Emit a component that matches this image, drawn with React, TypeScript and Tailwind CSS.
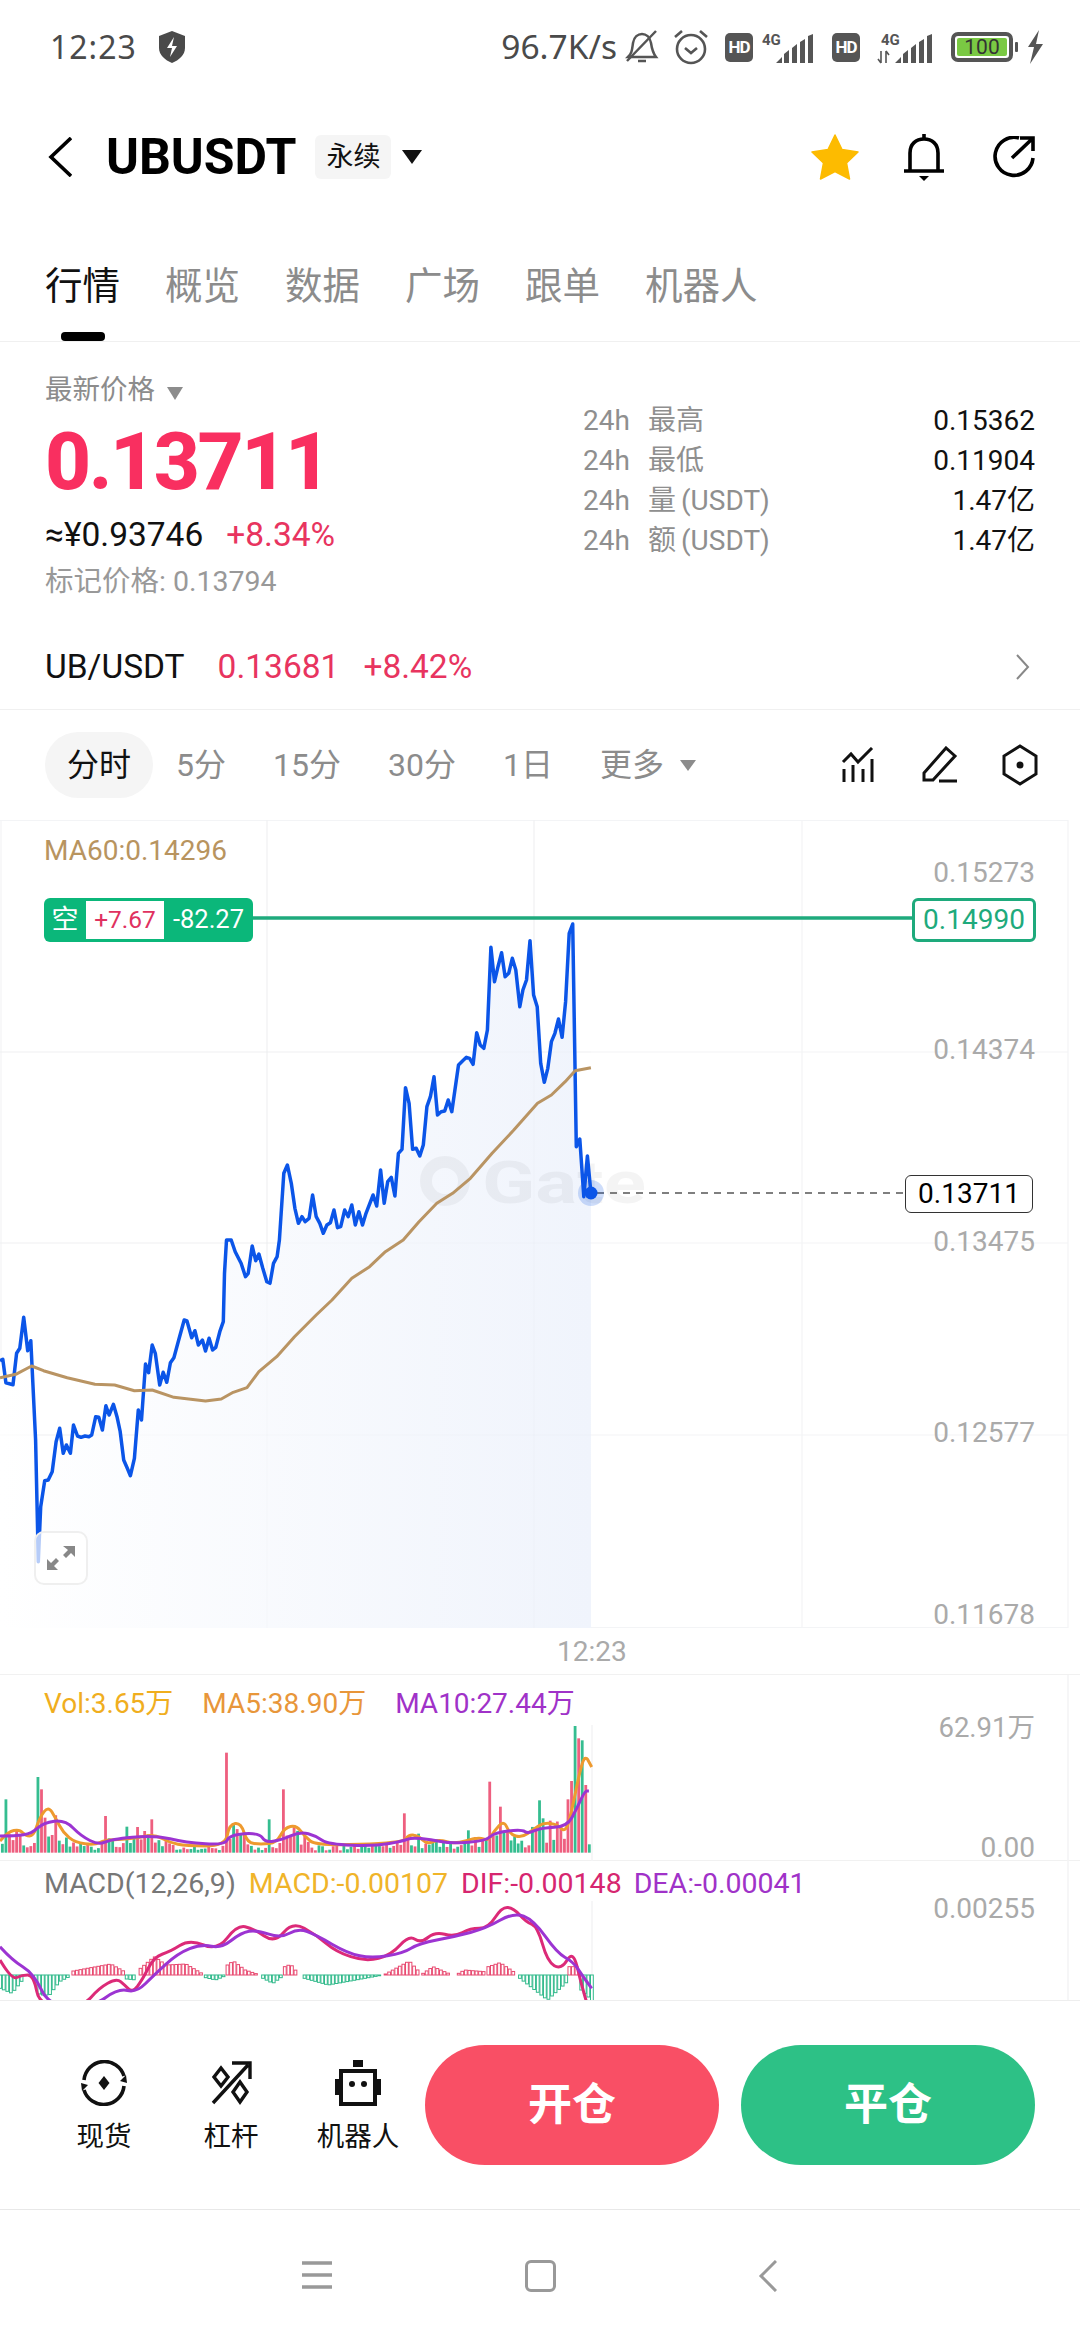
import React from "react";

type P = number[];
const SX = 2.53;
// pairs are sampled x / y readings from the reference
const pts = (a: P, y0: number, off: number) => {
  const out: string[] = [];
  for (let i = 0; i < a.length; i += 2) out.push(`${(a[i] / SX).toFixed(1)},${(y0 + a[i + 1] / 3 - off).toFixed(1)}`);
  return out.join(" ");
};
// smooth curve through the midpoints of the sampled readings
const curve = (a: P, y0: number, off: number) => {
  const X = (i: number) => a[i] / SX;
  const Y = (i: number) => y0 + a[i + 1] / 3 - off;
  let d = `M${X(0).toFixed(1)} ${Y(0).toFixed(1)}`;
  for (let i = 2; i < a.length - 2; i += 2) {
    d += ` Q${X(i).toFixed(1)} ${Y(i).toFixed(1)} ${((X(i) + X(i + 2)) / 2).toFixed(1)} ${((Y(i) + Y(i + 2)) / 2).toFixed(1)}`;
  }
  d += ` L${X(a.length - 2).toFixed(1)} ${Y(a.length - 2).toFixed(1)}`;
  return d;
};
const lerp = (a: P, x: number) => {
  for (let i = 0; i < a.length - 2; i += 2) {
    if (x >= a[i] && x <= a[i + 2]) return a[i + 1] + ((a[i + 3] - a[i + 1]) * (x - a[i])) / (a[i + 2] - a[i] || 1);
  }
  return a[a.length - 1];
};

const LINE_A: P = [0,362,7,358,15,428,33,434,42,340,50,325,60,232,70,332,78,302,90,600,97,965,103,800,113,722,122,720,132,695,142,605,151,565,160,640,168,615,178,640,186,555,196,588,205,592,215,588,225,590,232,585,242,530,250,532,259,570,268,497,276,525,287,493,296,530,304,575,313,660,322,685,330,707,340,655,350,510,358,540,368,372,376,398,385,315,393,340,404,435,413,397,422,427,431,368,440,353,452,300,466,240,473,243,485,293,493,272,502,315,512,300,520,333,529,295,538,330,546,322,556,275,565,245,568,100,573,0,585,0,595,35,610,70,621,110,628,100,638,18,647,62,655,42,665,85,675,125,683,130,692,70,701,50,707,0];
const LINE_B: P = [707,1260,718,1060,727,1035,737,1090,746,1165,755,1210,764,1190,772,1205,782,1195,791,1125,800,1190,809,1210,818,1240,827,1215,836,1208,845,1170,854,1223,862,1220,872,1170,881,1190,890,1155,899,1215,908,1175,917,1215,926,1180,944,1125,953,1158,963,1050,972,1150,981,1085,990,1072,999,1128,1008,1000,1017,988,1026,803,1035,850,1044,988,1053,985,1062,1008,1071,975,1080,860,1089,830,1098,770,1107,885,1116,875,1125,873,1134,840,1143,875,1160,735,1170,723,1180,712,1188,715,1197,733,1206,638,1215,675,1224,685,1233,630,1242,382,1251,485,1260,440,1269,398,1278,470,1287,460,1296,415,1305,450,1315,560,1323,510,1332,480,1341,362,1350,525,1359,560,1368,730,1377,787,1386,745,1395,665,1404,640,1413,597,1422,652,1431,545,1440,340,1449,312,1458,980,1467,957,1477,1130,1486,1008,1495,1118];
const MA_A: P = [0,413,40,403,80,378,110,392,170,413,240,433,290,435,340,452,385,450,440,472,520,483,560,477,590,457,625,443,655,395,700,350,745,290,800,225,840,180,890,115,935,80,975,35,1020,0];
const MA_B: P = [1020,1260,1060,1205,1105,1150,1145,1120,1190,1075,1245,1000,1300,930,1360,850,1395,825,1430,785,1455,752,1495,743];
const MA5: P = [0,540,20,512,50,505,65,525,85,525,100,470,122,435,140,470,160,515,190,545,240,552,265,537,310,535,350,530,390,520,430,545,470,555,570,555,580,490,610,485,625,545,660,550,700,545,720,500,750,493,770,525,800,555,1020,545,1035,520,1060,525,1080,550,1110,535,1150,550,1210,528,1235,540,1250,510,1275,478,1290,520,1320,530,1350,505,1375,485,1410,490,1430,515,1445,460,1465,340,1480,280,1497,318];
const MA10: P = [0,525,40,525,80,518,110,485,165,477,205,525,250,552,280,535,390,522,470,545,570,552,580,522,655,515,672,545,710,537,760,512,800,525,830,550,950,555,1020,540,1040,530,1090,535,1140,548,1230,540,1250,515,1320,505,1335,518,1370,500,1435,497,1460,440,1480,390,1490,390];
const DIF: P = [0,900,30,960,55,945,85,945,100,1040,210,1040,250,985,295,955,315,975,335,998,360,960,390,890,430,875,480,838,550,872,600,795,640,805,695,850,740,785,800,825,850,875,925,905,990,885,1035,825,1065,850,1100,815,1150,830,1190,805,1235,805,1270,740,1300,745,1330,785,1360,800,1385,905,1420,930,1450,870,1470,970,1490,1050];
const DEA: P = [0,860,30,900,85,940,125,1040,235,1040,300,985,345,998,390,945,450,880,510,852,560,865,610,818,650,810,710,835,755,805,800,825,880,880,940,895,1020,880,1060,850,1150,830,1230,805,1300,757,1350,780,1410,880,1450,905,1475,950,1497,985];

const SPIKES: [number, number, number][] = [[15,415,0],[97,348,0],[106,385,1],[115,470,1],[268,465,1],[322,497,0],[349,498,1],[367,510,1],[385,475,1],[575,275,1],[684,475,0],[718,385,1],[1026,457,1],[1188,508,0],[1242,362,1],[1269,437,1],[1368,418,0],[1377,472,0],[1440,415,1],[1449,360,1],[1458,195,0],[1467,232,1],[1476,238,0],[1485,372,1],[1494,550,0]];

const makeBars = () => {
  let s = 17;
  const rnd = () => { s = (s * 137 + 59) % 1009; return s / 1009; };
  const bars: { x: number; top: number; up: boolean }[] = [];
  for (let zx = 6; zx <= 1494; zx += 9) {
    const sp = SPIKES.find((k) => Math.abs(k[0] - zx) < 4.5);
    const env = 575 - lerp(MA5, zx);
    const top = sp ? sp[1] : 575 - env * (0.3 + rnd() * 0.85);
    bars.push({ x: zx, top, up: sp ? sp[2] === 1 : rnd() > 0.45 });
  }
  return bars;
};

const HIST: [number, number, number[], boolean][] = [
  [0, 60, [0,40,30,55,60,10], false],
  [90, 175, [90,30,100,60,125,60,150,20,175,5], false],
  [185, 315, [185,12,220,20,280,33,315,10], true],
  [320, 345, [320,12,345,15], false],
  [355, 510, [355,20,390,55,420,30,470,33,510,5], true],
  [520, 565, [520,8,545,15,565,5], false],
  [575, 650, [575,30,590,42,620,15,650,3], true],
  [665, 710, [665,10,690,25,710,8], false],
  [720, 755, [720,25,735,32,755,3], true],
  [770, 960, [770,10,830,30,900,15,960,2], false],
  [975, 1060, [975,3,1035,42,1060,10], true],
  [1070, 1140, [1070,5,1095,25,1140,2], true],
  [1160, 1225, [1160,5,1175,15,1225,10], true],
  [1235, 1305, [1235,25,1265,37,1305,5], true],
  [1315, 1435, [1315,10,1385,75,1435,20], false],
  [1440, 1460, [1440,25,1460,25], true],
  [1470, 1500, [1470,45,1500,80], false],
];

const MainChart = () => {
  const o = 820;
  const line = pts(LINE_A, 1240, o) + " " + pts(LINE_B, 820, o);
  const ma = pts(MA_A, 1240, o) + " " + pts(MA_B, 820, o);
  return (
    <svg className="absolute inset-0" width="1080" height="808" viewBox="0 0 1080 808">
      <defs>
        <linearGradient id="fillG" x1="0" x2="1" y1="0" y2="0">
          <stop offset="0" stopColor="#ffffff" />
          <stop offset="1" stopColor="#f0f4fc" />
        </linearGradient>
      </defs>
      <path d="M0 0.500H1068M0 232H1068M0 423H1068M0 615H1068M0 807.500H1068M1 0V808M267 0V808M534 0V808M802 0V808M1068 0V808" stroke="#f3f4f6" strokeWidth="1.200" fill="none" />
      <polygon points={`0,808 ${line} 591,808`} fill="url(#fillG)" />
      <path d="M267 0V808M534 0V808M0 232H591M0 423H591M0 615H591" stroke="#000" strokeOpacity="0.015" strokeWidth="1" />
      <g fill="#000" fillOpacity="0.045">
        <circle cx="445" cy="361" r="19" fill="none" stroke="#000" strokeOpacity="0.045" strokeWidth="12" />
        <text x="482" y="383" fontSize="60" fontWeight="700" textLength="164" lengthAdjust="spacingAndGlyphs" fontFamily="Roboto, sans-serif">Gate</text>
      </g>
      <polyline points={line} fill="none" stroke="#0b55e8" strokeWidth="3.500" strokeLinejoin="round" />
      <polyline points={ma} fill="none" stroke="#b99463" strokeWidth="3" strokeLinejoin="round" />
      <path d="M253 98H912" stroke="#1eaa7c" strokeWidth="3.500" />
      <path d="M597 373H905" stroke="#555" strokeWidth="1.500" strokeDasharray="7 6" />
      <circle cx="591" cy="373" r="13" fill="#0b55e8" fillOpacity="0.2" />
      <circle cx="591" cy="373" r="6.500" fill="#0b55e8" />
    </svg>
  );
};

const VolChart = () => {
  const bars = makeBars();
  const o = 1674;
  return (
    <svg className="absolute inset-0" width="1080" height="186" viewBox="0 0 1080 186">
      <path d="M592 50V186M1068 0V186" stroke="#f3f3f5" strokeWidth="1.500" />
      {bars.map((b, i) => (
        <rect key={i} x={b.x / SX - 1.4} y={1660 + b.top / 3 - o} width="2.800" height={(575 - b.top) / 3} fill={b.up ? "#ee5f7f" : "#35bd90"} />
      ))}
      <path d={curve(MA5, 1660, o)} fill="none" stroke="#ee9a2e" strokeWidth="3" />
      <path d={curve(MA10, 1660, o)} fill="none" stroke="#9c34d2" strokeWidth="3" />
    </svg>
  );
};

const MacdChart = () => {
  const o = 1861;
  const rects: React.ReactNode[] = [];
  HIST.forEach(([a, b, env, up], si) => {
    for (let zx = a; zx <= b; zx += 9) {
      const d = lerp(env, zx) / 3;
      const base = 1660 + 945 / 3 - o;
      rects.push(
        <rect key={`${si}-${zx}`} x={zx / SX - 1.2} y={up ? base - d : base} width="2.800" height={d} fill="#ffffff" stroke={up ? "#e8486f" : "#2fb98a"} strokeWidth="1" />
      );
    }
  });
  return (
    <svg className="absolute inset-0" width="1080" height="140" viewBox="0 0 1080 140">
      <path d="M592 40V140M1068 0V140" stroke="#f3f3f5" strokeWidth="1.500" />
      {rects}
      <path d={curve(DIF, 1660, o)} fill="none" stroke="#dc2a78" strokeWidth="3" />
      <path d={curve(DEA, 1660, o)} fill="none" stroke="#9c34d2" strokeWidth="3" />
    </svg>
  );
};

const Signal = ({ arrows }: { arrows?: boolean }) => (
  <svg width="58" height="34" viewBox="0 -4 58 34" fill="#555">
    <text x="4" y="11" fontSize="15" fontWeight="700" fontFamily="Roboto, sans-serif">4G</text>
    {arrows && <path d="M4 17v12M4 29l-3-4M9 29V17M9 17l3 4" stroke="#555" strokeWidth="1.600" fill="none" />}
    <path d="M18 29l6-6v6zM26 29v-9l5-4v13zM34 29V14l5-4v19zM42 29V8l5-3v24zM50 29V2l5-2v29z" />
  </svg>
);

const Hd = () => (
  <div className="w-[28px] h-[29px] rounded-[5px] bg-[#555] flex items-center justify-center text-white text-[17px] font-bold leading-none tracking-[-1px]">HD</div>
);

const StatusBar = () => (
  <div className="h-[94px] shrink-0 flex items-center pl-[50px] pr-[36px] text-[#4a4a4a]">
    <span className="text-[32px] leading-none tracking-[1px] font-['Noto_Sans',sans-serif]">12:23</span>
    <svg className="ml-[21px]" width="28" height="32" viewBox="0 0 28 32">
      <path d="M14 0l13 5v12c0 7-6 12-13 15C7 29 1 24 1 17V5z" fill="#4a4a4a" />
      <path d="M16 6l-7 11h5l-2 9 7-11h-5z" fill="#fff" />
    </svg>
    <div className="flex-1" />
    <span className="text-[33.500px] leading-none font-['Noto_Sans',sans-serif]">96.7K/s</span>
    <svg className="ml-[8px]" width="34" height="36" viewBox="0 0 34 36" fill="none" stroke="#555" strokeWidth="2.500">
      <path d="M3 28c4-4 4-7 5-14 1-6 5-9 9-9s8 3 9 9c1 7 2 10 5 14z" />
      <path d="M13 32h8M2 32L31 2" />
    </svg>
    <svg className="ml-[14px]" width="36" height="38" viewBox="0 0 36 38" fill="none" stroke="#555" strokeWidth="2.600">
      <circle cx="18" cy="21" r="14" />
      <path d="M12 20l6 5 6-5M2 9l7-6M34 9l-7-6" />
    </svg>
    <div className="ml-[16px]"><Hd /></div>
    <div className="ml-[5px]"><Signal /></div>
    <div className="ml-[16px]"><Hd /></div>
    <div className="ml-[17px]"><Signal arrows /></div>
    <div className="ml-[16px] relative w-[62px] h-[30px] rounded-[7px] border-[4px] border-[#555] p-[2px] mr-[2px]">
      <div className="h-full w-full bg-[#7ac943] rounded-[2px] flex items-center justify-center text-[21px] leading-none text-[#333]">100</div>
    </div>
    <div className="w-[3px] h-[10px] bg-[#555] rounded-[1px]" />
    <svg className="ml-[8px]" width="18" height="34" viewBox="0 0 18 34" fill="#555">
      <path d="M13 0L2 17h6L4 34l13-20h-7z" />
    </svg>
  </div>
);

const Header = () => (
  <div className="h-[126px] shrink-0 flex items-center pl-[48px] pr-[45px]">
    <svg width="24" height="40" viewBox="0 0 24 40" fill="none" stroke="#000" strokeWidth="3.600">
      <path d="M23 1L3 20l20 19" />
    </svg>
    <span className="ml-[34px] text-[50px] font-bold leading-none text-black">UBUSDT</span>
    <div className="ml-[19px] w-[76px] h-[44px] rounded-[6px] bg-[#f5f5f5] flex items-center justify-center text-[27px] text-[#111] leading-none">永续</div>
    <div className="ml-[11px] w-0 h-0 border-x-[10px] border-x-transparent border-t-[14px] border-t-[#111]" />
    <div className="flex-1" />
    <svg width="48" height="46" viewBox="0 0 48 46" fill="#fdbb00">
      <path d="M24 1l7 14.500 16 2.500-11.500 11 3 16L24 37.500 9.500 45l3-16L1 18l16-2.500z" stroke="#fdbb00" strokeWidth="1.500" strokeLinejoin="round" />
    </svg>
    <svg className="ml-[44px]" width="42" height="48" viewBox="0 0 42 48" fill="none" stroke="#000" strokeWidth="3.600">
      <path d="M7 37V20C7 11 13 6 21 6s14 5 14 14v17M1 38h40" />
      <path d="M21 1v4" />
      <path d="M16 43h10l-5 5z" fill="#000" stroke="none" />
    </svg>
    <svg className="ml-[48px]" width="42" height="42" viewBox="0 0 42 42" fill="none" stroke="#000" strokeWidth="3.600">
      <path d="M40 22a19 19 0 1 1-14-20" />
      <path d="M19 22L39 3M27 2h13v13" />
    </svg>
  </div>
);

const Tabs = () => (
  <div className="h-[122px] shrink-0 border-b border-[#f0f0f0] flex pl-[45px] pt-[46px] gap-[45px] text-[37.500px] leading-[40px] text-[#8c8c8c]">
    <div className="flex flex-col items-center">
      <span className="text-[#111]">行情</span>
      <div className="mt-[26px] w-[44px] h-[9px] rounded-[4px] bg-black" />
    </div>
    <span>概览</span>
    <span>数据</span>
    <span>广场</span>
    <span>跟单</span>
    <span>机器人</span>
  </div>
);

const Stat = ({ l, r, v }: { l: string; r?: string; v: string }) => (
  <div className="h-[40px] flex items-center text-[28px] leading-none">
    <span className="text-[#8f8f8f] w-[65px]">24h</span>
    <span className="text-[#8f8f8f]">{l}{r && <span className="ml-[5px]">{r}</span>}</span>
    <span className="ml-auto text-[#111]">{v}</span>
  </div>
);

const Price = () => (
  <div className="h-[368px] shrink-0 border-b border-[#f0f0f0] flex flex-col">
    <div className="h-[256px] flex">
      <div className="w-[583px] pl-[45px] pt-[32px]">
        <div className="h-[32px] flex items-center text-[27.500px] text-[#8c8c8c] leading-none">
          最新价格
          <div className="ml-[12px] mt-[6px] w-0 h-0 border-x-[8px] border-x-transparent border-t-[13px] border-t-[#8c8c8c]" />
        </div>
        <div className="mt-[16px] h-[80px] leading-[80px] text-[80px] font-extrabold tracking-[-2.400px] text-[#f92f60]">0.13711</div>
        <div className="mt-[15px] h-[36px] flex items-center text-[33.500px] leading-none">
          <span className="text-[#111]">≈¥0.93746</span>
          <span className="ml-[23px] text-[#e8345f]">+8.34%</span>
        </div>
        <div className="mt-[13px] h-[32px] flex items-center text-[28.500px] text-[#999] leading-none">标记价格: 0.13794</div>
      </div>
      <div className="flex-1 pt-[59px] pr-[45px]">
        <Stat l="最高" v="0.15362" />
        <Stat l="最低" v="0.11904" />
        <Stat l="量" r="(USDT)" v="1.47亿" />
        <Stat l="额" r="(USDT)" v="1.47亿" />
      </div>
    </div>
    <div className="mt-[49px] h-[40px] flex items-center pl-[45px] pr-[50px] text-[33.500px] leading-none">
      <span className="text-[#111]">UB/USDT</span>
      <span className="ml-[33px] text-[#e8345f]">0.13681</span>
      <span className="ml-[24px] text-[#e8345f]">+8.42%</span>
      <svg className="ml-auto" width="15" height="26" viewBox="0 0 15 26" fill="none" stroke="#888" strokeWidth="2">
        <path d="M2 1l11 12L2 25" />
      </svg>
    </div>
  </div>
);

const Intervals = () => (
  <div className="h-[110px] shrink-0 flex items-center pl-[45px] pr-[41px] text-[32px] leading-none text-[#8c8c8c]">
    <div className="w-[108px] h-[66px] rounded-[33px] bg-[#f5f5f5] text-[#111] flex items-center justify-center mr-[23px]">分时</div>
    <div className="flex items-center gap-[47px]">
      <span>5分</span>
      <span>15分</span>
      <span>30分</span>
      <span>1日</span>
      <span className="flex items-center">
        更多
        <span className="ml-[16px] w-0 h-0 border-x-[8px] border-x-transparent border-t-[11px] border-t-[#8c8c8c]" />
      </span>
    </div>
    <div className="flex-1" />
    <svg width="34" height="36" viewBox="0 0 34 36" fill="none" stroke="#111" strokeWidth="3">
      <path d="M2 15l8-8 7 8L31 1" />
      <path d="M3 22v13M12 18v17M22 22v13M31 12v23" />
    </svg>
    <svg className="ml-[46px]" width="38" height="38" viewBox="0 0 38 38" fill="none" stroke="#111" strokeWidth="3">
      <path d="M3 27L25 2l9 8-22 24H3zM18 35h18" />
    </svg>
    <svg className="ml-[42px]" width="38" height="42" viewBox="0 0 38 42" fill="none" stroke="#111" strokeWidth="3">
      <path d="M19 2l16 10v18L19 40 3 30V12z" />
      <circle cx="19" cy="21" r="3.500" fill="#111" stroke="none" />
    </svg>
  </div>
);

const Chart = () => (
  <div className="relative h-[808px] shrink-0">
    <MainChart />
    <div className="absolute left-[44px] top-[11px] text-[28px] leading-[40px] text-[#b8945f]">MA60:0.14296</div>
    <div className="absolute left-[44px] top-[78px] w-[209px] h-[44px] rounded-[6px] bg-[#0bb77a] flex items-center text-[27px] leading-none text-white">
      <span className="w-[42px] text-center">空</span>
      <span className="w-[78px] h-[38px] bg-white text-[#e0315f] flex items-center justify-center text-[24.500px]">+7.67</span>
      <span className="flex-1 text-center text-[25.500px]">-82.27</span>
    </div>
    <div className="absolute left-[912px] top-[78px] w-[124px] h-[44px] rounded-[6px] border-[3px] border-[#1eaa7c] bg-white flex items-center justify-center text-[28px] leading-none text-[#1eaa7c]">0.14990</div>
    <div className="absolute left-[905px] top-[355px] w-[128px] h-[38px] rounded-[6px] border border-[#333] bg-white flex items-center justify-center text-[28px] leading-none text-black">0.13711</div>
    <div className="absolute right-[45px] top-[33px] text-[28px] leading-[40px] text-[#aaa]">0.15273</div>
    <div className="absolute right-[45px] top-[210px] text-[28px] leading-[40px] text-[#aaa]">0.14374</div>
    <div className="absolute right-[45px] top-[402px] text-[28px] leading-[40px] text-[#aaa]">0.13475</div>
    <div className="absolute right-[45px] top-[593px] text-[28px] leading-[40px] text-[#aaa]">0.12577</div>
    <div className="absolute right-[45px] top-[775px] text-[28px] leading-[40px] text-[#aaa]">0.11678</div>
    <div className="absolute left-[34px] top-[711px] w-[54px] h-[54px] rounded-[10px] border-2 border-[#efefef] bg-white/70 flex items-center justify-center">
      <svg width="28" height="26" viewBox="0 0 28 26" fill="#888">
        <path d="M16 1h12v11l-4-4-5 5-3-3 5-5zM0 14l4 4 5-5 3 3-5 5 4 4H0z" />
      </svg>
    </div>
  </div>
);

const TimeRow = () => (
  <div className="h-[46px] shrink-0 pl-[557px] pt-[6px] text-[28px] leading-[36px] text-[#aaa]">12:23</div>
);

const VolumePane = () => (
  <div className="relative h-[187px] shrink-0 border-t border-[#f1f1f1] border-b">
    <VolChart />
    <div className="relative flex pl-[44px] pt-[10px] text-[28px] leading-[38px]">
      <span className="text-[#f0ae1e]">Vol:3.65万</span>
      <span className="ml-[29px] text-[#e8963a]">MA5:38.90万</span>
      <span className="ml-[29px] text-[#a032c8]">MA10:27.44万</span>
    </div>
    <div className="absolute right-[45px] top-[33px] text-[27.500px] leading-[40px] text-[#aaa]">62.91万</div>
    <div className="absolute right-[45px] top-[153px] text-[28px] leading-[40px] text-[#aaa]">0.00</div>
  </div>
);

const MacdPane = () => (
  <div className="relative h-[140px] shrink-0 overflow-hidden border-b border-[#eeeeee]">
    <MacdChart />
    <div className="relative flex pl-[44px] pt-[4px] text-[28.500px] leading-[38px]">
      <span className="text-[#777]">MACD(12,26,9)</span>
      <span className="ml-[13px] text-[#f0b429]">MACD:-0.00107</span>
      <span className="ml-[13px] text-[#d6266f]">DIF:-0.00148</span>
      <span className="ml-[12px] text-[#a032c8]">DEA:-0.00041</span>
    </div>
    <div className="absolute right-[45px] top-[28px] text-[28px] leading-[40px] text-[#aaa]">0.00255</div>
  </div>
);

const Tool = ({ label, children }: { label: string; children: React.ReactNode }) => (
  <div className="flex flex-col items-center w-[100px]">
    <div className="h-[48px] flex items-center justify-center">{children}</div>
    <span className="mt-[13px] text-[27.500px] leading-[34px] text-[#111] whitespace-nowrap">{label}</span>
  </div>
);

const BottomBar = () => (
  <div className="h-[209px] shrink-0 border-b border-[#e8e8e8] flex items-start pt-[44px] pl-[54px] pr-[45px]">
    <div className="flex pt-[14px] gap-[27px]">
      <Tool label="现货">
        <svg width="46" height="46" viewBox="0 0 46 46" fill="none" stroke="#111" strokeWidth="3.600">
          <path d="M3 20A20.500 20.500 0 0 1 43 16M43 26A20.500 20.500 0 0 1 3 30" />
          <path d="M39 21l6-6 1 8zM7 25l-6 6-1-8z" fill="#111" stroke="none" />
          <path d="M23 16l5.500 7-5.500 7-5.500-7z" fill="#111" stroke="none" />
        </svg>
      </Tool>
      <Tool label="杠杆">
        <svg width="42" height="44" viewBox="0 0 42 44" fill="none" stroke="#111" strokeWidth="3.400">
          <path d="M3 42L38 4M22 2h18v16" />
          <path d="M11 7l7 9-7 9-7-9zM30 21l7 10-7 10-7-10z" />
        </svg>
      </Tool>
      <Tool label="机器人">
        <svg width="48" height="46" viewBox="0 0 48 46" fill="none" stroke="#111" strokeWidth="4">
          <path d="M7 11h34v33H7z" />
          <path d="M19 0h10v7H19zM1 19h4v16H1zM43 19h4v16h-4z" fill="#111" stroke="none" />
          <circle cx="18" cy="24" r="3" fill="#111" stroke="none" />
          <circle cx="30" cy="24" r="3" fill="#111" stroke="none" />
        </svg>
      </Tool>
    </div>
    <div className="ml-auto flex gap-[22px]">
      <div className="w-[294px] h-[120px] rounded-full bg-[#f94f65] flex items-center justify-center text-white text-[44px] font-bold leading-none">开仓</div>
      <div className="w-[294px] h-[120px] rounded-full bg-[#2dc186] flex items-center justify-center text-white text-[44px] font-bold leading-none">平仓</div>
    </div>
  </div>
);

const NavBar = () => (
  <div className="h-[130px] shrink-0 flex items-start pt-[50px] pl-[302px]">
    <svg width="30" height="30" viewBox="0 0 30 30" stroke="#999" strokeWidth="3.500">
      <path d="M0 3h30M0 15h30M0 27h30" />
    </svg>
    <div className="ml-[193px] w-[31px] h-[32px] rounded-[6px] border-[3px] border-[#999]" />
    <svg className="ml-[202px]" width="19" height="32" viewBox="0 0 19 32" fill="none" stroke="#999" strokeWidth="3">
      <path d="M18 1L3 16l15 15" />
    </svg>
  </div>
);

export default function App() {
  return (
    <div className="w-[1080px] h-[2340px] overflow-hidden bg-white flex flex-col font-[Roboto,'Noto_Sans_CJK_SC',sans-serif]">
      <StatusBar />
      <Header />
      <Tabs />
      <Price />
      <Intervals />
      <Chart />
      <TimeRow />
      <VolumePane />
      <MacdPane />
      <BottomBar />
      <NavBar />
    </div>
  );
}
